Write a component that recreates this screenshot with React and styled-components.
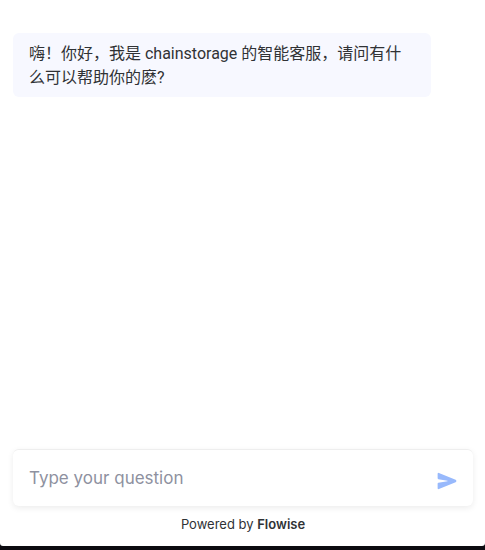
import React from "react";
import styled, { createGlobalStyle } from "styled-components";

const GlobalStyle = createGlobalStyle`
  *, *::before, *::after { box-sizing: border-box; }
  body {
    margin: 0;
    background: #0c0b10;
    font-family: Inter, "Noto Sans CJK SC", sans-serif;
  }
`;

const Page = styled.div`
  min-height: 100vh;
  display: flex;
  flex-direction: column;
  padding-bottom: 4px;
`;

const ChatWindow = styled.main`
  flex: 1;
  display: flex;
  flex-direction: column;
  padding: 33px 12px 13px 13px;
  background: #ffffff;
  border-radius: 0 0 3px 3px;
`;

const MessageList = styled.section`
  flex: 1;
  display: flex;
  flex-direction: column;
  align-items: flex-start;
  padding-right: 42px;
`;

const BotMessage = styled.p`
  margin: 0;
  padding: 9px 16px 7px;
  border-radius: 6px;
  background: #f7f8ff;
  color: #303235;
  font-family: Roboto, "Noto Sans CJK SC", sans-serif;
  font-size: 16px;
  line-height: 24px;
`;

const Composer = styled.form`
  display: flex;
  align-items: center;
  height: 57px;
  border-top: 1px solid #eeeeee;
  border-radius: 6px;
  background: #ffffff;
  box-shadow: 0 2px 6px rgba(0, 0, 0, 0.08);
`;

const QuestionInput = styled.input`
  flex: 1;
  min-width: 0;
  height: 100%;
  padding: 0 16px 1px;
  border: 0;
  outline: 0;
  background: transparent;
  color: #303235;
  font-family: Inter, sans-serif;
  font-size: 17px;
  font-weight: 400;

  &::placeholder {
    color: #8e91a0;
    opacity: 1;
  }
`;

const SendButton = styled.button`
  display: flex;
  padding: 5px 16px 0;
  border: 0;
  background: transparent;
  color: #98b9fc;
  cursor: pointer;
`;

const Credit = styled.footer`
  padding-top: 9px;
  color: #303235;
  font-size: 13px;
  line-height: 18px;
  text-align: center;
`;

const CreditLink = styled.a`
  color: inherit;
  font-weight: 600;
  text-decoration: none;
`;

function SendIcon() {
  return (
    <svg width="20" height="20" viewBox="0 0 512 512" fill="currentColor" aria-hidden="true">
      <path d="M476.59 227.05l-.16-.07L49.35 49.84A23.56 23.56 0 0027.14 52 24.65 24.65 0 0016 72.59v113.29a24 24 0 0019.52 23.57l232.93 43.07a4 4 0 010 7.86L35.53 303.45A24 24 0 0016 327v113.31A23.57 23.57 0 0026.59 460a23.94 23.94 0 0013.22 4 24.55 24.55 0 009.52-1.93L476.4 285.94l.19-.09a32 32 0 000-58.8z" />
    </svg>
  );
}

export default function App() {
  return (
    <Page>
      <GlobalStyle />
      <ChatWindow>
        <MessageList>
          <BotMessage lang="zh-CN">
            嗨！你好，我是 chainstorage 的智能客服，请问有什么可以帮助你的麽?
          </BotMessage>
        </MessageList>
        <Composer onSubmit={(event) => event.preventDefault()}>
          <QuestionInput type="text" placeholder="Type your question" aria-label="Type your question" />
          <SendButton type="submit" aria-label="Send">
            <SendIcon />
          </SendButton>
        </Composer>
        <Credit>
          Powered by <CreditLink href="#">Flowise</CreditLink>
        </Credit>
      </ChatWindow>
    </Page>
  );
}
